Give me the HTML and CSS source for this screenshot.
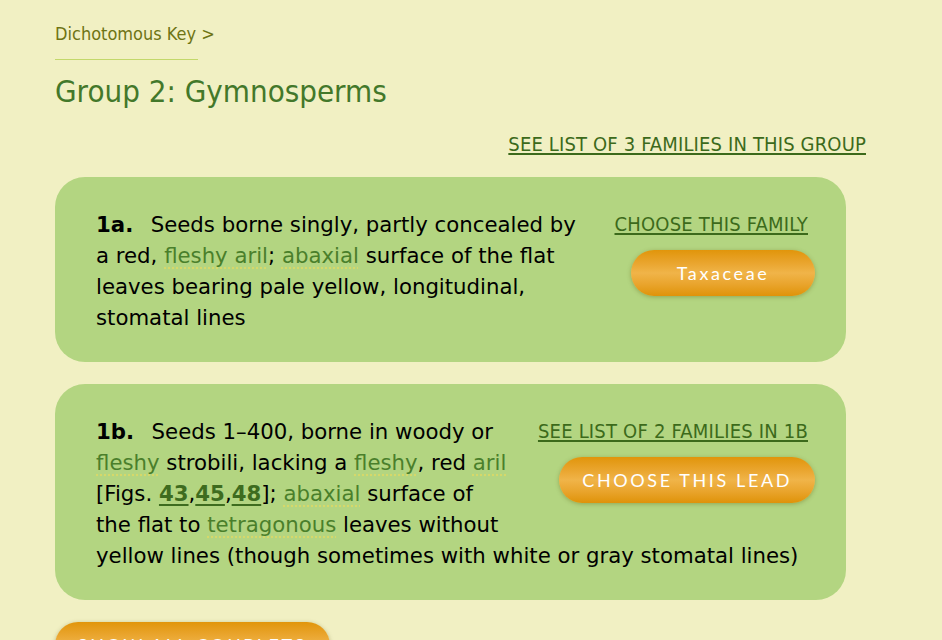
FILE: index.html
```html
<!DOCTYPE html>
<html lang="en">
<head>
<meta charset="utf-8">
<title>Group 2: Gymnosperms</title>
<link rel="stylesheet" href="styles.css">
</head>
<body>
<div class="page">
  <nav class="crumb"><a href="#">Dichotomous Key</a> &gt;</nav>
  <div class="rule"></div>
  <h1 class="title">Group 2: Gymnosperms</h1>
  <div class="group-link"><a href="#">SEE LIST OF 3 FAMILIES IN THIS GROUP</a></div>

  <div class="couplet">
    <div class="actions">
      <a class="small-link" href="#">CHOOSE THIS FAMILY</a>
      <a class="btn btn-family" href="#">Taxaceae</a>
    </div>
    <p class="lead"><b class="num">1a.</b>&nbsp; Seeds borne singly, partly concealed by a red, <span class="term">fleshy aril</span>; <span class="term">abaxial</span> surface of the flat leaves bearing pale yellow, longitudinal, stomatal lines</p>
  </div>

  <div class="couplet">
    <div class="actions">
      <a class="small-link" href="#">SEE LIST OF 2 FAMILIES IN 1B</a>
      <a class="btn btn-lead" href="#">CHOOSE THIS LEAD</a>
    </div>
    <p class="lead"><b class="num">1b.</b>&nbsp; Seeds 1–400, borne in woody or <span class="term">fleshy</span> strobili, lacking a <span class="term">fleshy</span>, red <span class="term">aril</span> [Figs. <a class="fig" href="#">43</a>,<a class="fig" href="#">45</a>,<a class="fig" href="#">48</a>]; <span class="term">abaxial</span> surface of the flat to <span class="term">tetragonous</span> leaves without yellow lines (though sometimes with white or gray stomatal lines)</p>
  </div>

  <a class="btn btn-all" href="#">SHOW ALL COUPLETS</a>
</div>
</body>
</html>
```

FILE: styles.css
```css
html, body {
  margin: 0;
  padding: 0;
  background: #f1f0c3;
}
body {
  font-family: "DejaVu Sans", Verdana, sans-serif;
  color: #000;
}
.page {
  width: 811px;
  padding: 24px 0 0 55px;
}
.crumb {
  font-family: "DejaVu Sans Condensed", Tahoma, sans-serif;
  font-size: 18px;
  line-height: 20px;
  color: #6e7414;
}
.crumb a {
  color: #6e7414;
  text-decoration: none;
}
.rule {
  width: 143px;
  height: 1px;
  background: #c3d86a;
  margin-top: 15px;
}
.title {
  font-family: "DejaVu Sans Condensed", Tahoma, sans-serif;
  font-weight: normal;
  font-size: 31px;
  line-height: 40px;
  color: #43782a;
  margin: 11px 0 0 0;
}
.group-link {
  text-align: right;
  margin-top: 22px;
  font-family: "DejaVu Sans Condensed", Tahoma, sans-serif;
  font-size: 20px;
  line-height: 22px;
  letter-spacing: 0.15px;
}
.group-link a, .small-link {
  color: #3c6a1b;
  text-decoration: underline;
  text-underline-offset: 2px;
}
.couplet {
  margin: 22px 20px 0 0;
  background: #b3d581;
  border-radius: 30px;
  padding: 32px 31px 29px 41px;
  display: flow-root;
}
.couplet + .couplet {
  margin-top: 22px;
}
.actions {
  float: right;
  display: flex;
  flex-direction: column;
  align-items: flex-end;
  margin: 0 0 10px 30px;
  padding-top: 4px;
}
.small-link {
  font-family: "DejaVu Sans Condensed", Tahoma, sans-serif;
  font-size: 20px;
  line-height: 22px;
  letter-spacing: 0.2px;
  margin-right: 7px;
}
.lead {
  margin: 0;
  font-size: 21.25px;
  line-height: 31px;
}
.num {
  font-weight: bold;
  margin-right: 4px;
}
.term {
  color: #4a7f2b;
  text-decoration: underline dotted #d6d86a;
  text-underline-offset: 4px;
}
.fig {
  color: #3e6c1f;
  font-weight: bold;
  text-decoration: underline;
  text-underline-offset: 3px;
}
.btn {
  display: inline-flex;
  align-items: center;
  justify-content: center;
  height: 46px;
  box-sizing: border-box;
  padding: 0 23px;
  border-radius: 23px;
  background: linear-gradient(#e1950b 0%, #eaa630 30%, #f0b449 50%, #e9a42c 75%, #df9309 100%);
  box-shadow: 0 1px 4px rgba(90, 80, 0, 0.35);
  color: #fff;
  text-decoration: none;
  white-space: nowrap;
  font-family: Lato, "Open Sans", sans-serif;
  font-size: 18px;
  letter-spacing: 2.6px;
}
.btn-family {
  min-width: 184px;
  margin-top: 15px;
}
.btn-lead {
  margin-top: 15px;
}
.btn-all {
  margin-top: 22px;
  width: 275px;
}
```
